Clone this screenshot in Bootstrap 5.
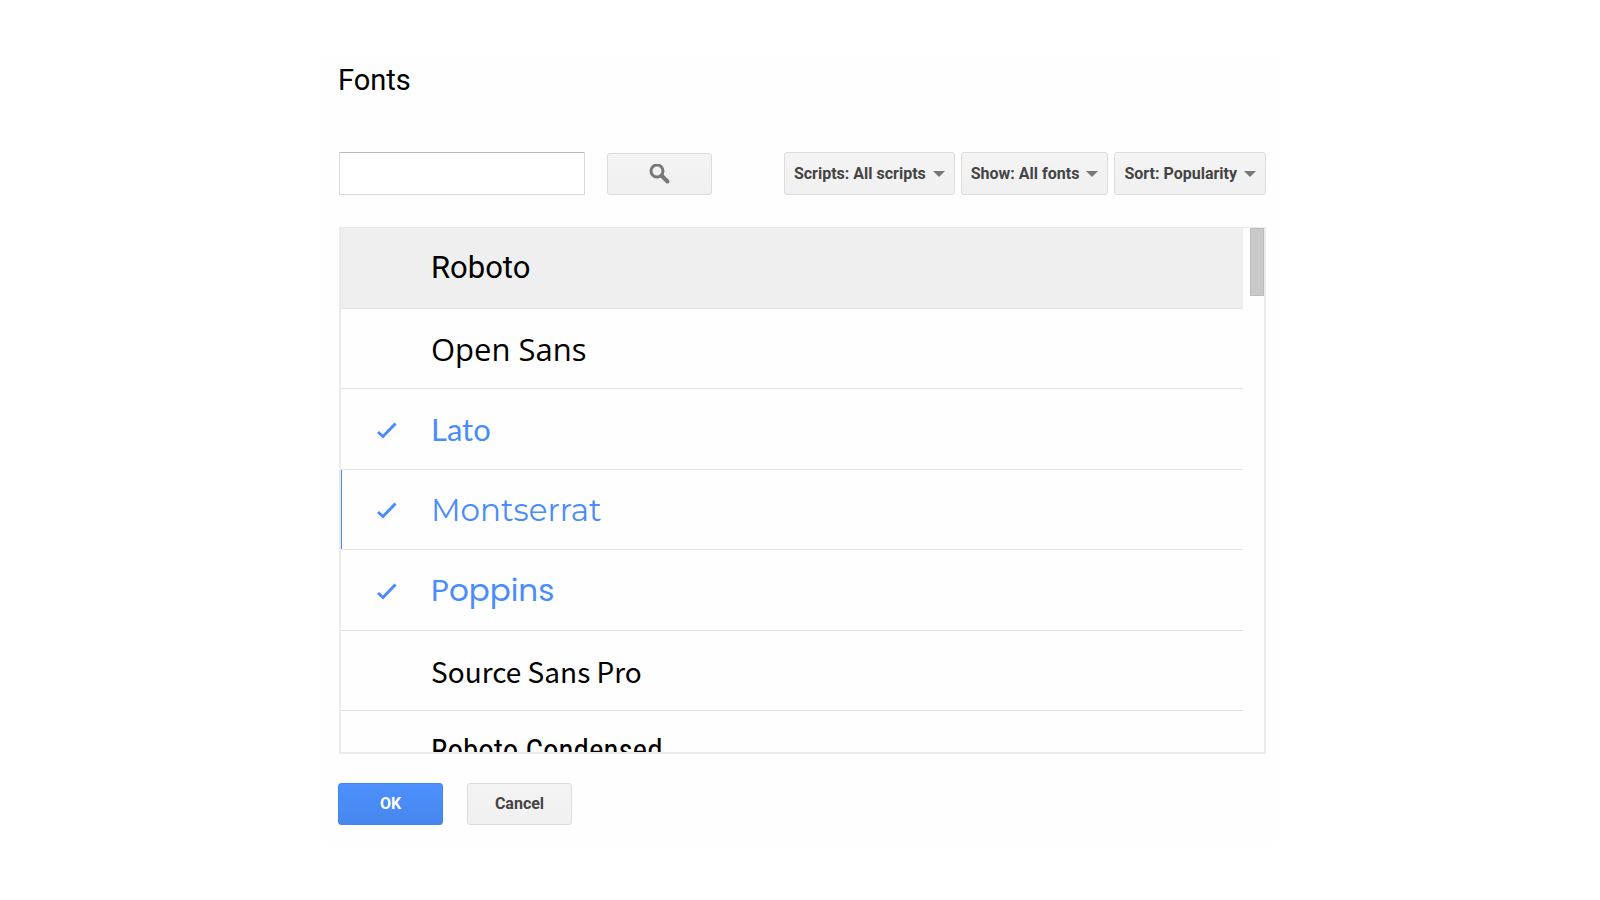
<!DOCTYPE html>
<html lang="en">
<head>
<meta charset="utf-8">
<meta name="viewport" content="width=device-width, initial-scale=1">
<title>Fonts</title>
<link href="https://cdn.jsdelivr.net/npm/bootstrap@5.3.0/dist/css/bootstrap.min.css" rel="stylesheet">
<style>
  body { font-family: Roboto, "Liberation Sans", sans-serif; background: #fff; color: #000; }
  .font-dialog { width: 100%; max-width: 954px; background: #fefefe; padding: 5px 11px 18px 15px; }
  .font-dialog h1 { font-size: 29px; line-height: 36px; margin: 0 0 54px; font-weight: 400; }
  .inset { margin-left: 1px; }
  .search-form { gap: 22px; }
  .filters { gap: 6px; }
  .search-box { width: 246px; height: 43px; border: 1px solid #d9d9d9; border-top-color: #b9b9b9; border-radius: 1px; background: #fff; }
  .btn-tool { height: 42px; padding: 0 9px; border: 1px solid #dcdcdc; border-radius: 3px; font-size: 16px; line-height: 24px; font-weight: 700; color: #444;
    background: linear-gradient(#f4f4f4, #f0f0f0); }
  .btn-tool:hover { border-color: #c6c6c6; color: #222; }
  .btn-fixed { width: 105px; }
  .btn-ok { color: #fff; border-color: #4285f4; background: linear-gradient(#4d90fe, #4787ed); }
  .btn-ok:hover { color: #fff; border-color: #2f5bb7; }
  .filter-btn { height: 43px; }
  .filter-btn::after { content: ""; border: 6px solid transparent; border-top-color: #777; border-bottom: 0; margin-left: 7px; }
  .font-list { height: 527px; margin-top: 32px; border: 2px solid #ebebeb; border-top-width: 1px; }
  .font-row { height: 81px; padding-left: 36px; border-bottom: 1px solid #e3e3e3; font-size: 31px; line-height: 44px; cursor: pointer; }
  .font-row:nth-child(even) { height: 80px; }
  .font-row:hover, .font-row.current { background-color: #efefef; }
  .font-row.selected { color: #4a8cfb; }
  .font-row.focused { box-shadow: inset 1px 0 #4a8cfb, -1px 0 #a9c8fb; }
  .tick { width: 54px; flex: none; padding-top: 2px; }
  .f-open { font-family: "Open Sans", sans-serif; }
  .f-lato { font-family: Lato, sans-serif; }
  .f-mont { font-family: Montserrat, Inter, sans-serif; }
  .f-popp { font-family: Poppins, Inter, sans-serif; }
  .font-row.f-source { font-family: "Source Sans Pro", "Noto Sans CJK SC", sans-serif; font-size: 28px; }
  .f-cond { font-family: "Roboto Condensed", Roboto, sans-serif; }
  .rail { width: 21px; }
  .thumb { width: 14px; height: 68px; background: #c9c9c9; border: 1px solid #bdbdbd; }
  .actions { margin-top: 29px; }
</style>
</head>
<body>
<div class="min-vh-100 d-flex align-items-center justify-content-center">
  <main class="font-dialog">
    <h1>Fonts</h1>
    <div class="inset d-flex flex-wrap align-items-center justify-content-between gap-2">
      <form class="search-form d-flex align-items-end">
        <input type="text" class="search-box px-2" aria-label="Search fonts">
        <button type="button" class="btn btn-tool btn-fixed" aria-label="Search">
          <svg width="22" height="22" viewBox="0 0 22 22" fill="none" stroke="#777"><circle cx="8" cy="7" r="6" stroke-width="3"/><path d="M12.5 11.5 18.5 17.5" stroke-width="4" stroke-linecap="round"/></svg>
        </button>
      </form>
      <div class="d-flex filters">
        <button type="button" class="btn btn-tool filter-btn d-flex align-items-center">Scripts: All scripts</button>
        <button type="button" class="btn btn-tool filter-btn d-flex align-items-center">Show: All fonts</button>
        <button type="button" class="btn btn-tool filter-btn d-flex align-items-center">Sort: Popularity</button>
      </div>
    </div>
    <div class="font-list inset d-flex overflow-hidden">
      <div class="flex-grow-1">
        <label class="font-row current d-flex align-items-center"><input type="checkbox" class="visually-hidden"><span class="tick"></span><span>Roboto</span></label>
        <label class="font-row d-flex align-items-center f-open"><input type="checkbox" class="visually-hidden"><span class="tick"></span><span>Open Sans</span></label>
        <label class="font-row selected d-flex align-items-center f-lato"><input type="checkbox" class="visually-hidden" checked><span class="tick d-flex"><svg width="20" height="17" viewBox="0 0 20 17"><path d="M1 10 6 14.5 18.5 1.5" fill="none" stroke="#4a8cfb" stroke-width="3"/></svg></span><span>Lato</span></label>
        <label class="font-row selected focused d-flex align-items-center f-mont"><input type="checkbox" class="visually-hidden" checked><span class="tick d-flex"><svg width="20" height="17" viewBox="0 0 20 17"><path d="M1 10 6 14.5 18.5 1.5" fill="none" stroke="#4a8cfb" stroke-width="3"/></svg></span><span>Montserrat</span></label>
        <label class="font-row selected d-flex align-items-center f-popp"><input type="checkbox" class="visually-hidden" checked><span class="tick d-flex"><svg width="20" height="17" viewBox="0 0 20 17"><path d="M1 10 6 14.5 18.5 1.5" fill="none" stroke="#4a8cfb" stroke-width="3"/></svg></span><span>Poppins</span></label>
        <label class="font-row d-flex align-items-center f-source"><input type="checkbox" class="visually-hidden"><span class="tick"></span><span>Source Sans Pro</span></label>
        <label class="font-row d-flex align-items-center f-cond"><input type="checkbox" class="visually-hidden"><span class="tick"></span><span>Roboto Condensed</span></label>
      </div>
      <div class="rail d-flex justify-content-end"><div class="thumb"></div></div>
    </div>
    <div class="d-flex gap-4 actions">
      <button type="button" class="btn btn-tool btn-fixed btn-ok">OK</button>
      <button type="button" class="btn btn-tool btn-fixed">Cancel</button>
    </div>
  </main>
</div>
<script src="https://cdn.jsdelivr.net/npm/bootstrap@5.3.0/dist/js/bootstrap.bundle.min.js"></script>
</body>
</html>
